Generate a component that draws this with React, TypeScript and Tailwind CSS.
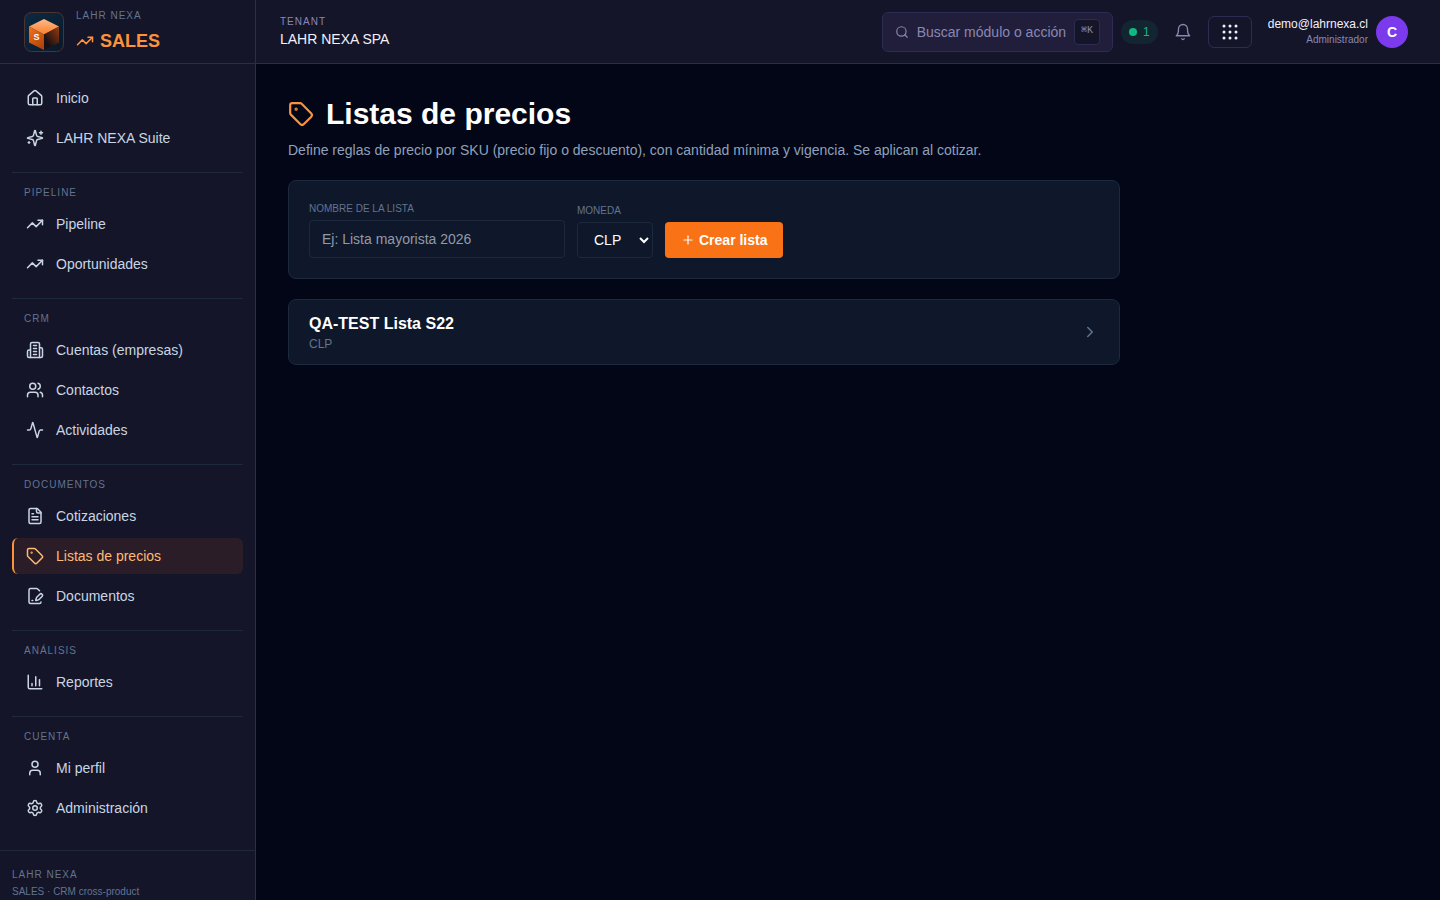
import type { ReactNode } from "react";
import {
    Activity,
    ChevronRight,
    House,
    Plus,
    Search,
    Settings,
    Tag,
    TrendingUp,
    User,
    Users,
} from "lucide-react";

type NavItem = { label: string; icon: ReactNode; active?: boolean };
type NavSection = { title?: string; items: NavItem[] };

function Glyph({ children, strokeWidth = 2 }: { children: ReactNode; strokeWidth?: number }) {
    return (
        <svg
            width="18"
            height="18"
            viewBox="0 0 24 24"
            fill="none"
            stroke="currentColor"
            strokeWidth={strokeWidth}
            strokeLinecap="round"
            strokeLinejoin="round"
            aria-hidden="true"
        >
            {children}
        </svg>
    );
}

const SparklesIcon = () => (
    <Glyph>
        <path d="M9.937 15.5A2 2 0 0 0 8.5 14.063l-6.135-1.582a.5.5 0 0 1 0-.962L8.5 9.936A2 2 0 0 0 9.937 8.5l1.582-6.135a.5.5 0 0 1 .963 0L14.063 8.5A2 2 0 0 0 15.5 9.937l6.135 1.581a.5.5 0 0 1 0 .964L15.5 14.063a2 2 0 0 0-1.437 1.437l-1.582 6.135a.5.5 0 0 1-.963 0z" />
        <path d="M20 3v4M22 5h-4M4 17v2M5 18H3" />
    </Glyph>
);

const BuildingIcon = () => (
    <Glyph>
        <path d="M6 22V4a2 2 0 0 1 2-2h8a2 2 0 0 1 2 2v18Z" />
        <path d="M6 12H4a2 2 0 0 0-2 2v6a2 2 0 0 0 2 2h2" />
        <path d="M18 9h2a2 2 0 0 1 2 2v9a2 2 0 0 1-2 2h-2" />
        <path d="M10 6h4M10 10h4M10 14h4M10 18h4" />
    </Glyph>
);

const FileTextIcon = () => (
    <Glyph>
        <path d="M15 2H6a2 2 0 0 0-2 2v16a2 2 0 0 0 2 2h12a2 2 0 0 0 2-2V7Z" />
        <path d="M14 2v4a2 2 0 0 0 2 2h4M10 9H8M16 13H8M16 17H8" />
    </Glyph>
);

const FilePenIcon = () => (
    <Glyph>
        <path d="m18 5-2.414-2.414A2 2 0 0 0 14.172 2H6a2 2 0 0 0-2 2v16a2 2 0 0 0 2 2h12a2 2 0 0 0 2-2" />
        <path d="M21.378 12.626a1 1 0 0 0-3.004-3.004l-4.01 4.012a2 2 0 0 0-.506.854l-.837 2.87a.5.5 0 0 0 .62.62l2.87-.837a2 2 0 0 0 .854-.506z" />
        <path d="M8 18h1" />
    </Glyph>
);

const ChartIcon = () => (
    <Glyph>
        <path d="M3 3v16a2 2 0 0 0 2 2h16M18 17V9M13 17V5M8 17v-3" />
    </Glyph>
);

const BellIcon = () => (
    <Glyph strokeWidth={1.75}>
        <path d="M6 8a6 6 0 0 1 12 0c0 7 3 9 3 9H3s3-2 3-9" />
        <path d="M10.3 21a1.94 1.94 0 0 0 3.4 0" />
    </Glyph>
);

const sections: NavSection[] = [
    {
        items: [
            { label: "Inicio", icon: <House size={18} /> },
            { label: "LAHR NEXA Suite", icon: <SparklesIcon /> },
        ],
    },
    {
        title: "Pipeline",
        items: [
            { label: "Pipeline", icon: <TrendingUp size={18} /> },
            { label: "Oportunidades", icon: <TrendingUp size={18} /> },
        ],
    },
    {
        title: "CRM",
        items: [
            { label: "Cuentas (empresas)", icon: <BuildingIcon /> },
            { label: "Contactos", icon: <Users size={18} /> },
            { label: "Actividades", icon: <Activity size={18} /> },
        ],
    },
    {
        title: "Documentos",
        items: [
            { label: "Cotizaciones", icon: <FileTextIcon /> },
            { label: "Listas de precios", icon: <Tag size={18} />, active: true },
            { label: "Documentos", icon: <FilePenIcon /> },
        ],
    },
    {
        title: "Análisis",
        items: [{ label: "Reportes", icon: <ChartIcon /> }],
    },
    {
        title: "Cuenta",
        items: [
            { label: "Mi perfil", icon: <User size={18} /> },
            { label: "Administración", icon: <Settings size={18} /> },
        ],
    },
];

function Logo() {
    return (
        <svg width="40" height="40" viewBox="0 0 40 40" className="shrink-0" aria-hidden="true">
            <defs>
                <linearGradient id="tile" x1="0" y1="0" x2="1" y2="1">
                    <stop offset="0" stopColor="#0c2a42" />
                    <stop offset="1" stopColor="#0a1828" />
                </linearGradient>
                <linearGradient id="cubeTop" x1="0" y1="0" x2="0" y2="1">
                    <stop offset="0" stopColor="#ffb98a" />
                    <stop offset="1" stopColor="#fb7f2c" />
                </linearGradient>
                <linearGradient id="cubeLeft" x1="0" y1="0" x2="0.6" y2="1">
                    <stop offset="0" stopColor="#f87416" />
                    <stop offset="1" stopColor="#b0430f" />
                </linearGradient>
                <linearGradient id="cubeRight" x1="1" y1="0" x2="0.3" y2="0.8">
                    <stop offset="0" stopColor="#9a3a10" />
                    <stop offset="1" stopColor="#140f14" />
                </linearGradient>
            </defs>
            <rect x="0.5" y="0.5" width="39" height="39" rx="7" fill="url(#tile)" stroke="#4a3531" />
            <path d="M20 7 35 14.5 20 22.5 5 14.5Z" fill="url(#cubeTop)" />
            <path d="M5 14.5 20 22.5V38L5 30.5Z" fill="url(#cubeLeft)" />
            <path d="M35 14.5 20 22.5V38L35 30.5Z" fill="url(#cubeRight)" />
            <text x="12.5" y="28" textAnchor="middle" fontSize="9" fontWeight="700" fill="#ffffff">
                S
            </text>
        </svg>
    );
}

function Sidebar() {
    return (
        <aside className="sticky top-0 flex h-screen w-64 shrink-0 flex-col overflow-hidden border-r border-[#2d2b52] bg-[#141529]">
            <div className="flex h-16 shrink-0 items-center gap-3 border-b border-[#2d2b52] px-6">
                <Logo />
                <div>
                    <div className="text-[10px] leading-[15px] tracking-widest text-slate-500">LAHR NEXA</div>
                    <div className="mt-1 flex items-center gap-1.5 text-lg font-bold text-[#fb923c]">
                        <TrendingUp size={18} />
                        SALES
                    </div>
                </div>
            </div>

            <nav className="shrink-0 grow px-3 pt-4 pb-6">
                {sections.map((section, index) => (
                    <div key={index} className={section.title ? "mt-4 border-t border-slate-800 pt-3" : ""}>
                        {section.title && (
                            <h2 className="px-3 pb-1.5 text-[10px] leading-[15px] tracking-widest text-slate-500 uppercase">
                                {section.title}
                            </h2>
                        )}
                        <ul className="flex flex-col gap-1">
                            {section.items.map((item) => (
                                <li key={item.label}>
                                    <a
                                        href="#"
                                        aria-current={item.active ? "page" : undefined}
                                        className={
                                            item.active
                                                ? "flex h-9 items-center gap-3 rounded-md border-l-2 border-[#fb923c] bg-[#2b1d27] px-3 text-sm text-[#fdba74]"
                                                : "flex h-9 items-center gap-3 rounded-md border-l-2 border-transparent px-3 text-sm text-slate-300"
                                        }
                                    >
                                        {item.icon}
                                        {item.label}
                                    </a>
                                </li>
                            ))}
                        </ul>
                    </div>
                ))}
            </nav>

            <div className="shrink-0 border-t border-slate-800 px-3 py-4 text-[10px] leading-[15px] text-slate-500">
                <div className="tracking-widest">LAHR NEXA</div>
                <div className="mt-0.5">SALES · CRM cross-product</div>
            </div>
        </aside>
    );
}

function TopBar() {
    return (
        <header className="flex h-16 shrink-0 items-center justify-between border-b border-[#2d2b52] bg-[#141529] px-6">
            <div>
                <div className="text-[10px] leading-[15px] tracking-widest text-[#8b87b3]">TENANT</div>
                <div className="text-sm text-[#f1f0fb]">LAHR NEXA SPA</div>
            </div>

            <div className="flex items-center gap-2">
                <button
                    type="button"
                    className="flex h-10 items-center gap-2 rounded-md border border-[#2d2b52] bg-[#201e3a] px-3 text-sm text-[#8b87b3]"
                >
                    <Search size={14} />
                    Buscar módulo o acción
                    <kbd className="flex h-[26px] w-[26px] items-center justify-center rounded border border-[#2d2b52] bg-[#141529] font-['Liberation_Mono',monospace] text-[10px]">
                        ⌘K
                    </kbd>
                </button>
                <div className="flex h-6 items-center gap-1.5 rounded-full bg-[#132530] px-2 text-xs text-[#10b981]">
                    <span className="size-2 rounded-full bg-[#10b981]" />
                    1
                </div>
                <button type="button" aria-label="Notificaciones" className="p-2 text-[#8b87b3]">
                    <BellIcon />
                </button>
                <button
                    type="button"
                    aria-label="Aplicaciones"
                    className="flex h-8 w-11 items-center justify-center rounded-md border border-[#2d2b52] text-[#f1f0fb]"
                >
                    <svg width="16" height="16" viewBox="0 0 16 16" fill="currentColor" aria-hidden="true">
                        {[2, 8, 14].map((y) => [2, 8, 14].map((x) => <circle key={`${x}-${y}`} cx={x} cy={y} r="1.5" />))}
                    </svg>
                </button>
                <button type="button" className="flex items-center gap-2 px-2">
                    <span className="text-right">
                        <span className="block text-xs text-[#f1f0fb]">demo@lahrnexa.cl</span>
                        <span className="block text-[10px] leading-[15px] text-[#8b87b3]">Administrador</span>
                    </span>
                    <span className="flex size-8 items-center justify-center rounded-full bg-[#7c3aed] text-sm font-bold text-white">
                        C
                    </span>
                </button>
            </div>
        </header>
    );
}

export default function App() {
    return (
        <div className="flex min-h-screen bg-[#020617] font-['Liberation_Sans',Arial,sans-serif]">
            <Sidebar />
            <div className="flex min-w-0 flex-1 flex-col">
                <TopBar />
                <main className="w-full max-w-4xl p-8">
                    <h1 className="flex items-center gap-3 text-3xl font-bold text-white">
                        <Tag size={26} className="text-[#fb923c]" />
                        Listas de precios
                    </h1>
                    <p className="mt-2 text-sm text-slate-400">
                        Define reglas de precio por SKU (precio fijo o descuento), con cantidad mínima y vigencia. Se
                        aplican al cotizar.
                    </p>

                    {/* Nueva lista */}
                    <form className="mt-5 flex flex-wrap items-end gap-3 rounded-lg border border-slate-800 bg-[#0f172a] p-5">
                        <div>
                            <label htmlFor="nombre" className="block text-[10px] leading-[15px] text-slate-500 uppercase">
                                Nombre de la lista
                            </label>
                            <input
                                id="nombre"
                                type="text"
                                placeholder="Ej: Lista mayorista 2026"
                                className="mt-1 block w-64 rounded border border-slate-800 bg-transparent px-3 py-2 text-sm text-white placeholder:text-[#929aa8]"
                            />
                        </div>
                        <div>
                            <label htmlFor="moneda" className="block text-[10px] leading-[15px] text-slate-500 uppercase">
                                Moneda
                            </label>
                            <select
                                id="moneda"
                                className="mt-1 block h-9 w-[76px] rounded border border-slate-800 bg-[#0f172a] px-3 text-sm text-white"
                            >
                                <option>CLP</option>
                                <option>USD</option>
                            </select>
                        </div>
                        <button
                            type="button"
                            className="flex h-9 items-center gap-1 rounded bg-[#f97316] px-4 text-sm font-bold text-white"
                        >
                            <Plus size={14} />
                            Crear lista
                        </button>
                    </form>

                    <a
                        href="#"
                        className="mt-5 flex items-center justify-between rounded-lg border border-slate-800 bg-[#0f172a] px-5 py-3"
                    >
                        <div>
                            <div className="font-bold text-white">QA-TEST Lista S22</div>
                            <div className="text-xs text-slate-500">CLP</div>
                        </div>
                        <ChevronRight size={18} className="text-slate-500" />
                    </a>
                </main>
            </div>
        </div>
    );
}
